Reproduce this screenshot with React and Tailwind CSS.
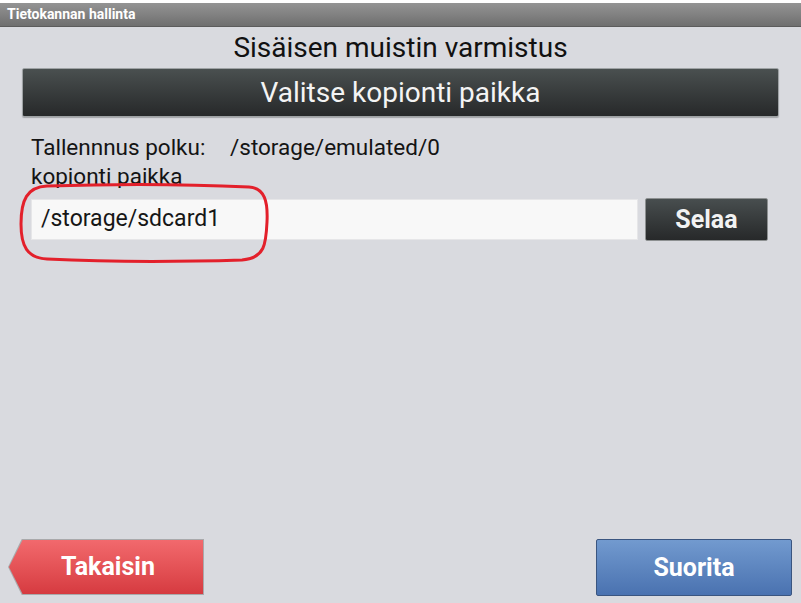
import React from "react";

const App = () => {
  return (
    <div className="relative w-[801px] h-[603px] overflow-hidden bg-[#d9dadf] flex flex-col font-['Roboto',sans-serif]">
      {/* top strip */}
      <div className="h-[3px] bg-white shrink-0" />

      {/* title bar */}
      <div className="h-[24px] shrink-0 flex items-center px-[7px] bg-gradient-to-b from-[#949494] to-[#6f6f6f] border-b border-[#5c5c5c]">
        <span className="text-[14px] font-bold text-white">Tietokannan hallinta</span>
      </div>

      {/* heading */}
      <div className="h-[41px] shrink-0 flex items-center justify-center">
        <h1 className="text-[28px] leading-[34px] text-[#111]">Sisäisen muistin varmistus</h1>
      </div>

      {/* dark header bar */}
      <div className="mx-[22px] h-[49px] shrink-0 flex items-center justify-center rounded-[2px] border border-[#9ea2a4] bg-gradient-to-b from-[#4a5050] to-[#27292a] shadow-[0_1px_1px_rgba(0,0,0,0.25)]">
        <span className="text-[28px] text-[#f4f4f4]">Valitse kopionti paikka</span>
      </div>

      {/* path rows */}
      <div className="pl-[31px] pt-[16px] flex items-center text-[22.5px] leading-[28px] text-[#141414]">
        <span className="w-[199px]">Tallennnus polku:</span>
        <span>/storage/emulated/0</span>
      </div>
      <div className="pl-[31px] h-[27px] pt-[1px] overflow-hidden text-[22.5px] leading-[28px] text-[#141414]">
        kopionti paikka
      </div>

      {/* input row */}
      <div className="mt-[10px] pl-[31px] flex items-center gap-[7px]">
        <div className="w-[607px] h-[41px] flex items-center pl-[9px] bg-[#f8f8f8] border border-[#e6e6e8] text-[23px] text-[#161616]">
          /storage/sdcard1
        </div>
        <button className="w-[123px] h-[43px] rounded-[2px] border border-[#8d9091] bg-gradient-to-b from-[#484e4f] to-[#27292a] text-[25px] font-bold text-[#f2f2f2]">
          Selaa
        </button>
      </div>

      <div className="grow" />

      {/* bottom buttons */}
      <div className="h-[64px] shrink-0 flex items-start justify-between pl-[8px] pr-[9px]">
        <button className="w-[196px] h-[56px] bg-[#a9a9ab] [clip-path:polygon(7%_0,100%_0,100%_100%,7%_100%,0_50%)] p-[1px]">
          <span className="w-full h-full flex items-center justify-center pl-[4px] bg-gradient-to-b from-[#f2696d] to-[#d63a40] [clip-path:polygon(7%_0,100%_0,100%_100%,7%_100%,0_50%)] text-[25px] font-bold text-white">
            Takaisin
          </span>
        </button>
        <button className="w-[196px] h-[57px] rounded-[2px] border border-[#3a5580] bg-gradient-to-b from-[#729acf] to-[#4a72b0] text-[25px] font-bold text-white">
          Suorita
        </button>
      </div>

      {/* red annotation ring */}
      <svg className="absolute left-[17px] top-[182px]" width="254" height="82" viewBox="0 0 254 82">
        <path
          d="M30 4 C90 2 170 2 232 5 C248 6 251 20 250 40 C249 62 248 76 225 78 C160 80 90 80 30 77 C10 76 4 64 4 42 C4 18 10 5 30 4 Z"
          fill="none"
          stroke="#e3202b"
          strokeWidth="3"
        />
      </svg>
    </div>
  );
};

export default App;
